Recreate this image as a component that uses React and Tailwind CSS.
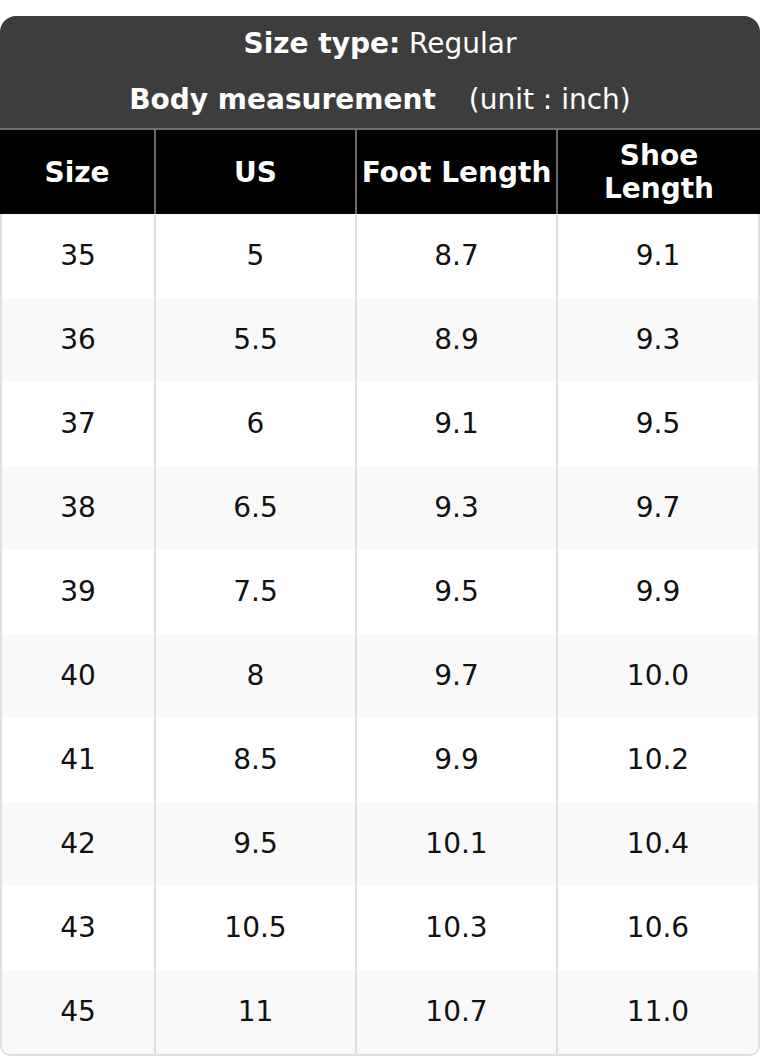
const rows = [
  ['35', '5', '8.7', '9.1'],
  ['36', '5.5', '8.9', '9.3'],
  ['37', '6', '9.1', '9.5'],
  ['38', '6.5', '9.3', '9.7'],
  ['39', '7.5', '9.5', '9.9'],
  ['40', '8', '9.7', '10.0'],
  ['41', '8.5', '9.9', '10.2'],
  ['42', '9.5', '10.1', '10.4'],
  ['43', '10.5', '10.3', '10.6'],
  ['45', '11', '10.7', '11.0'],
];

const cols = 'grid grid-cols-[154px_201px_201px_1fr]';

export default function App() {
  return (
    <div className="bg-white pt-4 text-[28px]" style={{ fontFamily: '"DejaVu Sans", sans-serif' }}>
      <div className="overflow-hidden rounded-t-[16px] rounded-b-[10px]">
        <div className="bg-[#3d3d3d] text-white text-center">
          <div className="h-[56px] leading-[56px]">
            <span className="font-bold">Size type:</span> Regular
          </div>
          <div className="h-[56px] leading-[56px]">
            <span className="font-bold">Body measurement</span>
            <span className="ml-[33px]">(unit : inch)</span>
          </div>
        </div>
        <div className={`${cols} bg-black text-white font-bold border-t-2 border-[#707070] h-[86px]`}>
          <div className="flex items-center justify-center text-center leading-[33px]">Size</div>
          <div className="flex items-center justify-center text-center leading-[33px] border-l-2 border-[#6b6b6b]">US</div>
          <div className="flex items-center justify-center text-center leading-[33px] border-l-2 border-[#6b6b6b] whitespace-nowrap">Foot Length</div>
          <div className="flex items-center justify-center text-center leading-[33px] border-l-2 border-[#6b6b6b]">Shoe<br />Length</div>
        </div>
        <div className="border-x-2 border-b-2 border-[#dedede] rounded-b-[10px] overflow-hidden text-[#111]">
          {rows.map((r, i) => (
            <div key={i} className={`grid grid-cols-[152px_201px_201px_1fr] h-[84px] ${i % 2 ? 'bg-[#f9f9f9]' : 'bg-white'}`}>
              {r.map((v, j) => (
                <div key={j} className={`flex items-center justify-center ${j ? 'border-l-2 border-[#dedede]' : ''}`}>
                  {v}
                </div>
              ))}
            </div>
          ))}
        </div>
      </div>
    </div>
  );
}
